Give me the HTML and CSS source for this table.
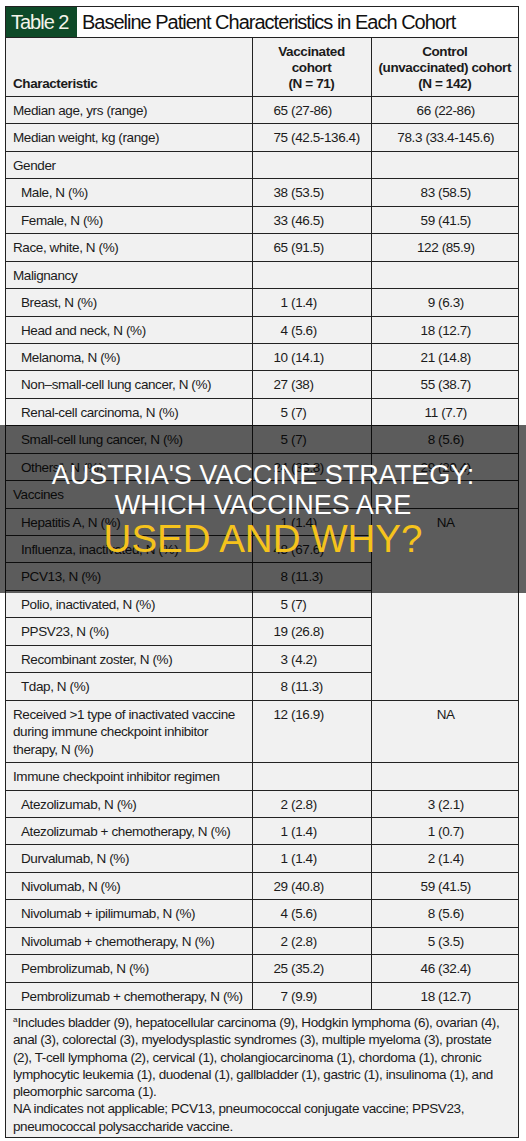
FILE: index.html
```html
<!DOCTYPE html>
<html lang="en">
<head>
<meta charset="UTF-8">
<title>Austria's Vaccine Strategy: Which Vaccines Are Used And Why?</title>
<link rel="stylesheet" href="styles.css">
</head>
<body>

<div class="table-container">
  <div class="title-container">
    <span class="title-tag">Table 2</span>
    <span class="title-text">Baseline Patient Characteristics in Each Cohort</span>
  </div>

  <table>
    <colgroup>
      <col class="col-char">
      <col class="col-vac">
      <col class="col-ctrl">
    </colgroup>
    <tr class="head-row">
      <th class="head-left">Characteristic</th>
      <th>Vaccinated<br>cohort<br>(N = 71)</th>
      <th>Control<br>(unvaccinated) cohort<br>(N = 142)</th>
    </tr>
    <tr><td>Median age, yrs (range)</td><td class="vac">65 (27-86)</td><td class="ctrl">66 (22-86)</td></tr>
    <tr><td>Median weight, kg (range)</td><td class="vac">75 (42.5-136.4)</td><td class="ctrl">78.3 (33.4-145.6)</td></tr>
    <tr><td>Gender</td><td></td><td></td></tr>
    <tr><td class="sub">Male, N (%)</td><td class="vac">38 (53.5)</td><td class="ctrl">83 (58.5)</td></tr>
    <tr><td class="sub">Female, N (%)</td><td class="vac">33 (46.5)</td><td class="ctrl">59 (41.5)</td></tr>
    <tr><td>Race, white, N (%)</td><td class="vac">65 (91.5)</td><td class="ctrl">122 (85.9)</td></tr>
    <tr><td>Malignancy</td><td></td><td></td></tr>
    <tr><td class="sub">Breast, N (%)</td><td class="vac">&#8199;1 (1.4)</td><td class="ctrl">9 (6.3)</td></tr>
    <tr><td class="sub">Head and neck, N (%)</td><td class="vac">&#8199;4 (5.6)</td><td class="ctrl">18 (12.7)</td></tr>
    <tr><td class="sub">Melanoma, N (%)</td><td class="vac">10 (14.1)</td><td class="ctrl">21 (14.8)</td></tr>
    <tr><td class="sub">Non–small-cell lung cancer, N (%)</td><td class="vac">27 (38)</td><td class="ctrl">55 (38.7)</td></tr>
    <tr><td class="sub">Renal-cell carcinoma, N (%)</td><td class="vac">&#8199;5 (7)</td><td class="ctrl">11 (7.7)</td></tr>
    <tr><td class="sub">Small-cell lung cancer, N (%)</td><td class="vac">&#8199;5 (7)</td><td class="ctrl">8 (5.6)</td></tr>
    <tr><td class="sub">Others<sup>a</sup>, N (%)</td><td class="vac">24 (33.8)</td><td class="ctrl">29 (20.4)</td></tr>
    <tr><td>Vaccines</td><td></td><td></td></tr>
    <tr><td class="sub">Hepatitis A, N (%)</td><td class="vac">&#8199;1 (1.4)</td><td class="ctrl" rowspan="7">NA</td></tr>
    <tr><td class="sub">Influenza, inactivated, N (%)</td><td class="vac">48 (67.6)</td></tr>
    <tr><td class="sub">PCV13, N (%)</td><td class="vac">&#8199;8 (11.3)</td></tr>
    <tr><td class="sub">Polio, inactivated, N (%)</td><td class="vac">&#8199;5 (7)</td></tr>
    <tr><td class="sub">PPSV23, N (%)</td><td class="vac">19 (26.8)</td></tr>
    <tr><td class="sub">Recombinant zoster, N (%)</td><td class="vac">&#8199;3 (4.2)</td></tr>
    <tr><td class="sub">Tdap, N (%)</td><td class="vac">&#8199;8 (11.3)</td></tr>
    <tr class="tall-row"><td>Received &gt;1 type of inactivated vaccine during immune checkpoint inhibitor therapy, N (%)</td><td class="vac">12 (16.9)</td><td class="ctrl">NA</td></tr>
    <tr><td>Immune checkpoint inhibitor regimen</td><td></td><td></td></tr>
    <tr><td class="sub">Atezolizumab, N (%)</td><td class="vac">&#8199;2 (2.8)</td><td class="ctrl">3 (2.1)</td></tr>
    <tr><td class="sub">Atezolizumab + chemotherapy, N (%)</td><td class="vac">&#8199;1 (1.4)</td><td class="ctrl">1 (0.7)</td></tr>
    <tr><td class="sub">Durvalumab, N (%)</td><td class="vac">&#8199;1 (1.4)</td><td class="ctrl">2 (1.4)</td></tr>
    <tr><td class="sub">Nivolumab, N (%)</td><td class="vac">29 (40.8)</td><td class="ctrl">59 (41.5)</td></tr>
    <tr><td class="sub">Nivolumab + ipilimumab, N (%)</td><td class="vac">&#8199;4 (5.6)</td><td class="ctrl">8 (5.6)</td></tr>
    <tr><td class="sub">Nivolumab + chemotherapy, N (%)</td><td class="vac">&#8199;2 (2.8)</td><td class="ctrl">5 (3.5)</td></tr>
    <tr><td class="sub">Pembrolizumab, N (%)</td><td class="vac">25 (35.2)</td><td class="ctrl">46 (32.4)</td></tr>
    <tr><td class="sub">Pembrolizumab + chemotherapy, N (%)</td><td class="vac">&#8199;7 (9.9)</td><td class="ctrl">18 (12.7)</td></tr>
  </table>

  <div class="notes-container">
    <p><sup>a</sup>Includes bladder (9), hepatocellular carcinoma (9), Hodgkin lymphoma (6), ovarian (4), anal (3), colorectal (3), myelodysplastic syndromes (3), multiple myeloma (3), prostate (2), T-cell lymphoma (2), cervical (1), cholangiocarcinoma (1), chordoma (1), chronic lymphocytic leukemia (1), duodenal (1), gallbladder (1), gastric (1), insulinoma (1), and pleomorphic sarcoma (1).</p>
    <p>NA indicates not applicable; PCV13, pneumococcal conjugate vaccine; PPSV23, pneumococcal polysaccharide vaccine.</p>
  </div>
</div>

<!-- faixa escura com o titulo por cima da tabela -->
<div class="banner">
  <div class="banner-line">AUSTRIA'S VACCINE STRATEGY:</div>
  <div class="banner-line">WHICH VACCINES ARE</div>
  <div class="banner-line banner-yellow">USED AND WHY?</div>
</div>

</body>
</html>
```

FILE: styles.css
```css
body {
  font-family: "Liberation Sans", Arial, sans-serif;
  background-color: #fff;
  color: #1b1b1b;
  margin: 0;
  padding: 6px 0 0 5px;
}
.table-container {
  width: 514px;
  box-sizing: border-box;
  border: 1px solid #222;
  background-color: #f1f1f1; /* fundo cinza claro da tabela */
  letter-spacing: -0.4px; /* imita a fonte condensada */
}
.title-container {
  display: flex;
  height: 30px;
  border-bottom: 1px solid #222;
  background-color: #fff;
  font-size: 20px;
  letter-spacing: -1px;
}
.title-tag {
  display: flex;
  align-items: center;
  width: 71px;
  box-sizing: border-box;
  padding-left: 5px;
  background-color: #0e4a28; /* verde escuro */
  color: #f4f4ea;
}
.title-text {
  display: flex;
  align-items: center;
  padding-left: 5px;
  white-space: nowrap;
  color: #111;
}
table {
  width: 512px;
  table-layout: fixed;
  border-collapse: collapse;
  border-style: hidden;
  font-size: 13.5px;
}
.col-char { width: 246px; }
.col-vac { width: 119px; }
.col-ctrl { width: 147px; }
th, td {
  border: 1px solid #222;
  line-height: 17.5px;
  vertical-align: top;
  padding: 5px 2px 3.95px 7px;
  text-align: left;
}
th {
  font-weight: bold;
  line-height: 16px;
  vertical-align: bottom;
  text-align: center;
  padding: 6px 2px 4px;
}
th.head-left {
  text-align: left;
  padding-left: 7px;
}
td.sub { padding-left: 15px; }
td.vac { padding-left: 21px; }
td.ctrl { text-align: center; padding-left: 4px; }
sup {
  font-size: 8px;
  line-height: 0;
  letter-spacing: 0;
}
.notes-container {
  border-top: 1px solid #222;
  padding: 4px 5px 2px 7px;
  font-size: 13.5px;
  line-height: 17.3px;
}
.notes-container p {
  margin: 0;
}
.banner {
  position: absolute;
  left: 0;
  top: 425px;
  width: 526px;
  height: 168px;
  background-color: rgba(0, 0, 0, 0.62);
  display: flex;
  flex-direction: column;
  justify-content: center;
  align-items: center;
  color: #fff;
  text-align: center;
}
.banner-line {
  font-size: 27px;
  line-height: 30px;
}
.banner-yellow {
  color: #f5c31c;
  font-size: 38.5px;
  line-height: 38px;
}
```
